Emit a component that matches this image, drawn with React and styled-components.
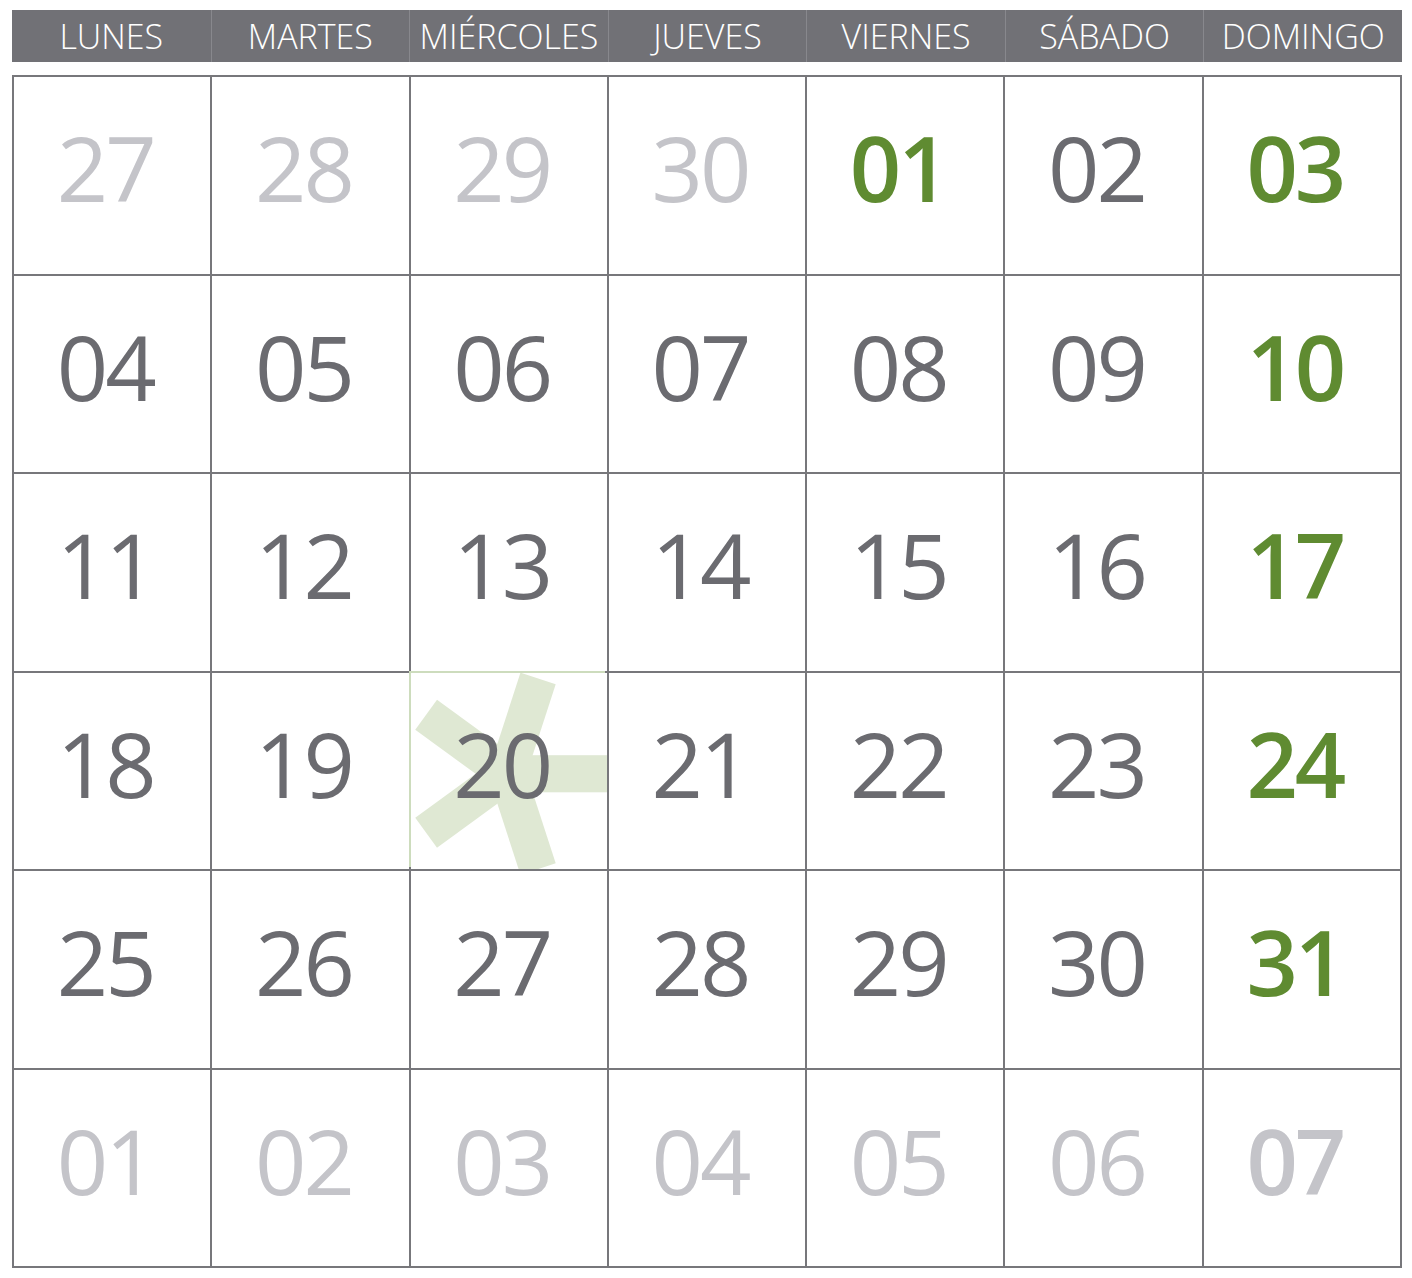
import React from "react";
import styled, { createGlobalStyle } from "styled-components";

const GlobalStyle = createGlobalStyle`
  body {
    margin: 0;
    background: #ffffff;
    font-family: "Open Sans", "Liberation Sans", sans-serif;
  }
`;

const Page = styled.div`
  padding: 10px 10px 0 12px;
  width: 1390px;
`;

const HeaderBar = styled.div`
  display: grid;
  grid-template-columns: repeat(7, 1fr);
  height: 52px;
  background-color: #717176;
`;

const DayName = styled.div`
  display: flex;
  align-items: center;
  justify-content: center;
  color: #ffffff;
  font-size: 34px;
  font-weight: 300;
  border-left: ${(props) => (props.first ? "none" : "1px solid #88888d")};
`;

const Grid = styled.div`
  margin-top: 13px;
  display: grid;
  grid-template-columns: repeat(7, 1fr);
  grid-template-rows: repeat(6, 196.5px);
  gap: 2px;
  padding: 2px;
  background-color: #77777b;
`;

const colors = {
  out: "#c4c4c9",
  normal: "#6b6b70",
  green: "#5f8b31",
};

const Cell = styled.div`
  position: relative;
  overflow: hidden;
  display: flex;
  align-items: center;
  justify-content: center;
  padding: 0 14px 16px 0;
  background-color: #ffffff;
  box-shadow: ${(props) => (props.marked ? "-2px -2px 0 #cddcbd" : "none")};
`;

const Day = styled.span`
  position: relative;
  font-size: 90px;
  line-height: 1;
  letter-spacing: -3px;
  font-weight: ${(props) => (props.bold ? 600 : 400)};
  color: ${(props) => colors[props.tone]};
`;

const Star = styled.svg`
  position: absolute;
  left: 0;
  top: 0;
  width: 100%;
  height: 100%;
`;

const days = ["LUNES", "MARTES", "MIÉRCOLES", "JUEVES", "VIERNES", "SÁBADO", "DOMINGO"];

const cell = (n, tone = "normal", bold = false) => ({ n, tone, bold });

const weeks = [
  [cell("27", "out"), cell("28", "out"), cell("29", "out"), cell("30", "out"), cell("01", "green", true), cell("02"), cell("03", "green", true)],
  [cell("04"), cell("05"), cell("06"), cell("07"), cell("08"), cell("09"), cell("10", "green", true)],
  [cell("11"), cell("12"), cell("13"), cell("14"), cell("15"), cell("16"), cell("17", "green", true)],
  [cell("18"), cell("19"), cell("20"), cell("21"), cell("22"), cell("23"), cell("24", "green", true)],
  [cell("25"), cell("26"), cell("27"), cell("28"), cell("29"), cell("30"), cell("31", "green", true)],
  [cell("01", "out"), cell("02", "out"), cell("03", "out"), cell("04", "out"), cell("05", "out"), cell("06", "out"), cell("07", "out", true)],
];

const MarkStar = () => (
  <Star viewBox="0 0 196 196" preserveAspectRatio="none">
    {[0, 72, 144, 216, 288].map((angle) => (
      <rect
        key={angle}
        x="96"
        y="82"
        width="100"
        height="37"
        fill="#dfe8d3"
        transform={`rotate(${-angle} 96 100.5)`}
      />
    ))}
  </Star>
);

export default function App() {
  return (
    <Page>
      <GlobalStyle />
      <HeaderBar>
        {days.map((d, i) => (
          <DayName key={d} first={i === 0}>
            {d}
          </DayName>
        ))}
      </HeaderBar>
      <Grid>
        {weeks.map((week, w) =>
          week.map((c, i) => {
            const marked = w === 3 && i === 2;
            return (
              <Cell key={`${w}-${i}`} marked={marked}>
                {marked && <MarkStar />}
                <Day tone={c.tone} bold={c.bold}>
                  {c.n}
                </Day>
              </Cell>
            );
          })
        )}
      </Grid>
    </Page>
  );
}
